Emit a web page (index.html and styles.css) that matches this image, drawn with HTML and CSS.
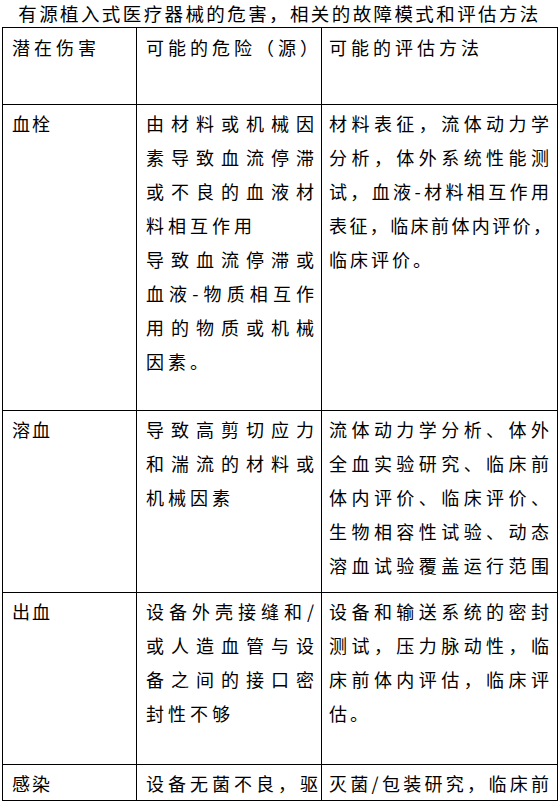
FILE: index.html
```html
<!DOCTYPE html>
<html lang="zh-CN">
<head>
<meta charset="utf-8">
<title>有源植入式医疗器械的危害</title>
<link rel="stylesheet" href="styles.css">
</head>
<body>
<h1 class="title">有源植入式医疗器械的危害，相关的故障模式和评估方法</h1>
<table class="hazards">
  <colgroup>
    <col class="col-name">
    <col class="col-cause">
    <col class="col-method">
  </colgroup>
  <thead>
    <tr class="row-head">
      <th class="name">潜在伤害</th>
      <th class="cause">可能的危险（源）</th>
      <th class="method">可能的评估方法</th>
    </tr>
  </thead>
  <tbody>
    <tr class="row-thrombus">
      <td class="name">血栓</td>
      <td class="cause">
        <span class="ln">由材料或机械因</span>
        <span class="ln">素导致血流停滞</span>
        <span class="ln">或不良的血液材</span>
        <span class="ln end">料相互作用</span>
        <span class="ln">导致血流停滞或</span>
        <span class="ln">血液-物质相互作</span>
        <span class="ln">用的物质或机械</span>
        <span class="ln end">因素。</span>
      </td>
      <td class="method">
        <span class="ln">材料表征，流体动力学</span>
        <span class="ln">分析，体外系统性能测</span>
        <span class="ln">试，血液-材料相互作用</span>
        <span class="ln tight">表征，临床前体内评价，</span>
        <span class="ln end">临床评价。</span>
      </td>
    </tr>
    <tr class="row-hemolysis">
      <td class="name">溶血</td>
      <td class="cause">
        <span class="ln">导致高剪切应力</span>
        <span class="ln">和湍流的材料或</span>
        <span class="ln end">机械因素</span>
      </td>
      <td class="method">
        <span class="ln">流体动力学分析、体外</span>
        <span class="ln">全血实验研究、临床前</span>
        <span class="ln">体内评价、临床评价、</span>
        <span class="ln">生物相容性试验、动态</span>
        <span class="ln">溶血试验覆盖运行范围</span>
      </td>
    </tr>
    <tr class="row-bleeding">
      <td class="name">出血</td>
      <td class="cause">
        <span class="ln">设备外壳接缝和/</span>
        <span class="ln">或人造血管与设</span>
        <span class="ln">备之间的接口密</span>
        <span class="ln end">封性不够</span>
      </td>
      <td class="method">
        <span class="ln">设备和输送系统的密封</span>
        <span class="ln">测试，压力脉动性，临</span>
        <span class="ln">床前体内评估，临床评</span>
        <span class="ln end">估。</span>
      </td>
    </tr>
    <tr class="row-infection">
      <td class="name">感染</td>
      <td class="cause">
        <span class="ln">设备无菌不良，驱</span>
      </td>
      <td class="method">
        <span class="ln">灭菌/包装研究，临床前</span>
      </td>
    </tr>
  </tbody>
</table>
</body>
</html>
```
FILE: styles.css
```css
html, body {
  margin: 0;
  padding: 0;
  background: #ffffff;
}

body {
  font-family: "Noto Sans CJK SC", sans-serif;
  color: #000000;
  width: 559px;
  overflow: hidden;
}

.title {
  margin: 0;
  font-size: 18.5px;
  font-weight: normal;
  line-height: 27px;
  letter-spacing: 2.4px;
  text-align: center;
}

.hazards {
  margin-left: 2px;
  width: 555px;
  border-collapse: collapse;
  table-layout: fixed;
  font-size: 18px;
  line-height: 34px;
}

.col-name { width: 134px; }
.col-cause { width: 185px; }
.col-method { width: 236px; }

.hazards th,
.hazards td {
  border: 1px solid #000000;
  vertical-align: top;
  text-align: left;
  font-weight: normal;
  padding: 1px 0 0 0;
}

.hazards th {
  padding-top: 2px;
  letter-spacing: 4px;
}

.hazards .name {
  padding-left: 9px;
  letter-spacing: 2px;
}

.hazards th.name {
  letter-spacing: 4px;
}

.hazards .cause {
  padding-left: 9px;
  padding-right: 3px;
}

.hazards .method {
  padding-left: 7px;
  padding-right: 5px;
}

.ln {
  display: block;
  white-space: nowrap;
  text-align: justify;
  text-align-last: justify;
}

.ln.end {
  text-align-last: left;
}

.cause .ln {
  letter-spacing: 4px;
}

.method .ln {
  letter-spacing: 3px;
}

.method .ln.tight {
  letter-spacing: 1px;
}

.row-head th { height: 74px; }
.row-thrombus td { height: 304px; }
.row-hemolysis td { height: 180px; }
.row-bleeding td { height: 170px; }
.row-infection td { height: 33px; }
```
